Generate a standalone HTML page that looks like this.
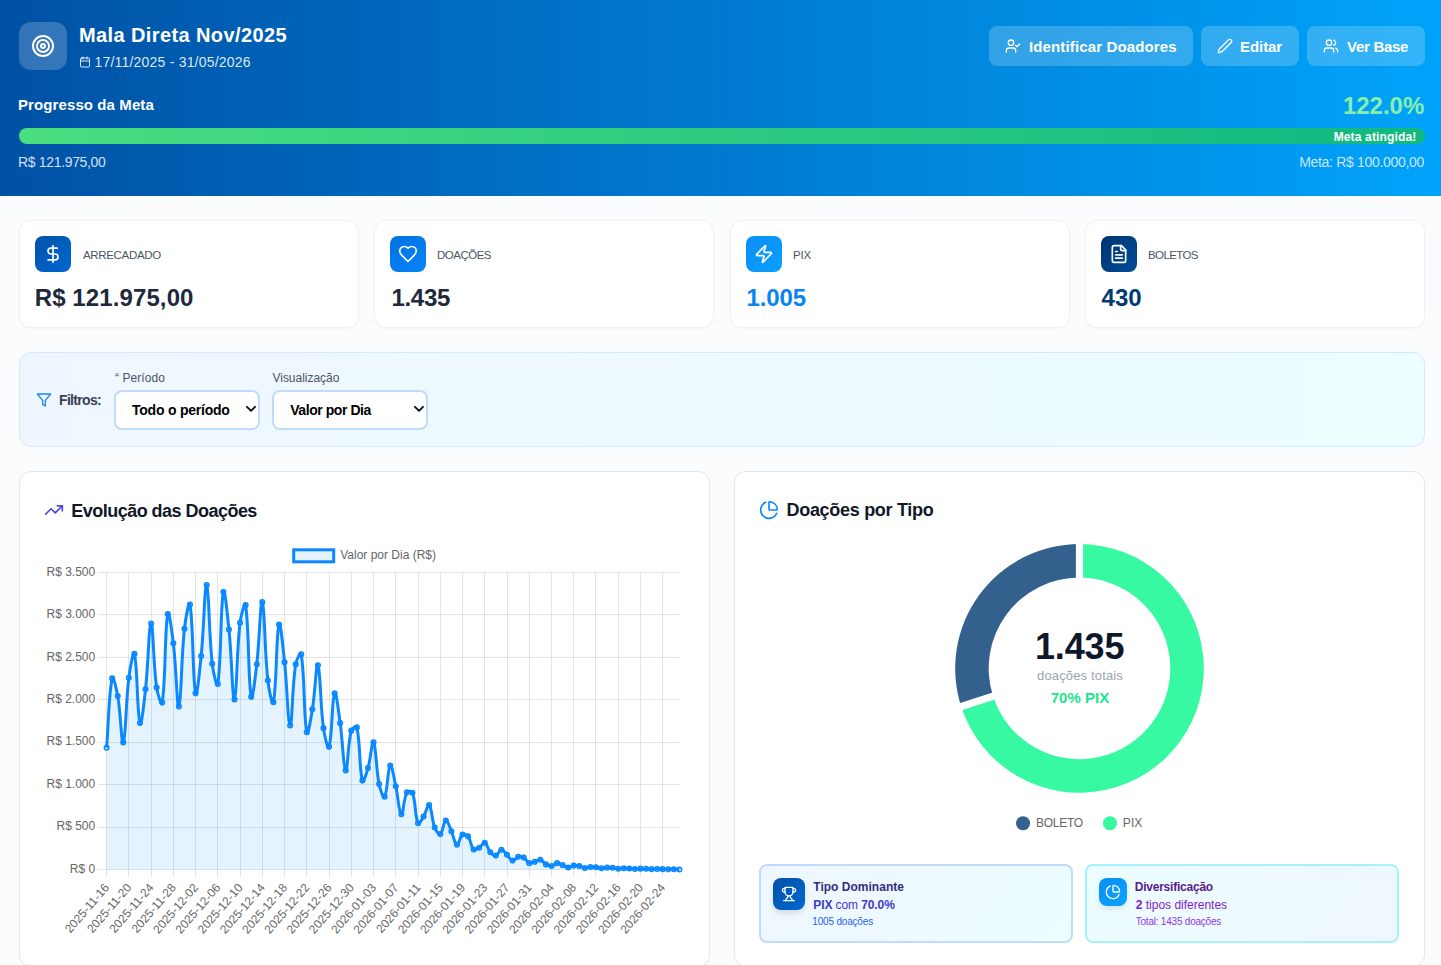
<!DOCTYPE html>
<html lang="pt-BR"><head><meta charset="utf-8"><title>Mala Direta Nov/2025</title>
<style>
*{margin:0;padding:0;box-sizing:border-box}
html,body{width:1441px;height:965px;overflow:hidden}
body{position:relative;font-family:"Liberation Sans", sans-serif;background:#fbfcfd;}
.t{position:absolute;white-space:nowrap}
.ic{position:absolute;display:block}
.box{position:absolute}
</style></head><body>
<div class="box" style="left:0;top:0;width:1441px;height:196px;background:linear-gradient(90deg,#0051a5 0%,#00a3fa 100%);"></div>
<div class="box" style="left:19px;top:22px;width:48px;height:48px;border-radius:12px;background:rgba(255,255,255,0.2)"></div>
<svg class="ic" style="left:31px;top:34px;" width="24" height="24" viewBox="0 0 24 24" fill="none" stroke="#fff" stroke-width="2" stroke-linecap="round" stroke-linejoin="round"><circle cx="12" cy="12" r="10"/><circle cx="12" cy="12" r="6"/><circle cx="12" cy="12" r="2"/></svg>
<div class="t" style="left:78.90px;top:24.67px;font-size:20px;line-height:20px;color:#fff;font-weight:700;letter-spacing:0.405px;">Mala Direta Nov/2025</div>
<svg class="ic" style="left:79px;top:56px;" width="12" height="12" viewBox="0 0 24 24" fill="none" stroke="rgba(255,255,255,0.85)" stroke-width="2" stroke-linecap="round" stroke-linejoin="round"><path d="M8 2v4"/><path d="M16 2v4"/><rect width="18" height="18" x="3" y="4" rx="2"/><path d="M3 10h18"/></svg>
<div class="t" style="left:94.50px;top:54.95px;font-size:14px;line-height:14px;color:rgba(255,255,255,0.88);font-weight:400;letter-spacing:0.205px;">17/11/2025 - 31/05/2026</div>
<div class="box" style="left:989px;top:26px;width:204px;height:40px;border-radius:8px;background:rgba(255,255,255,0.2)"></div>
<svg class="ic" style="left:1005px;top:38px;" width="16" height="16" viewBox="0 0 24 24" fill="none" stroke="#fff" stroke-width="2" stroke-linecap="round" stroke-linejoin="round"><path d="M16 21v-2a4 4 0 0 0-4-4H6a4 4 0 0 0-4 4v2"/><circle cx="9" cy="7" r="4"/><polyline points="16 11 18 13 22 9"/></svg>
<div class="t" style="left:1029.00px;top:38.90px;font-size:15px;line-height:15px;color:#fff;font-weight:700;letter-spacing:0.132px;">Identificar Doadores</div>
<div class="box" style="left:1201px;top:26px;width:98px;height:40px;border-radius:8px;background:rgba(255,255,255,0.2)"></div>
<svg class="ic" style="left:1217px;top:38px;" width="16" height="16" viewBox="0 0 24 24" fill="none" stroke="#fff" stroke-width="2" stroke-linecap="round" stroke-linejoin="round"><path d="M21.174 6.812a1 1 0 0 0-3.986-3.987L3.842 16.174a2 2 0 0 0-.5.83l-1.321 4.352a.5.5 0 0 0 .623.622l4.353-1.32a2 2 0 0 0 .83-.497z"/></svg>
<div class="t" style="left:1240.00px;top:38.90px;font-size:15px;line-height:15px;color:#fff;font-weight:700;letter-spacing:-0.06px;">Editar</div>
<div class="box" style="left:1307px;top:26px;width:118px;height:40px;border-radius:8px;background:rgba(255,255,255,0.2)"></div>
<svg class="ic" style="left:1323px;top:38px;" width="16" height="16" viewBox="0 0 24 24" fill="none" stroke="#fff" stroke-width="2" stroke-linecap="round" stroke-linejoin="round"><path d="M16 21v-2a4 4 0 0 0-4-4H6a4 4 0 0 0-4 4v2"/><circle cx="9" cy="7" r="4"/><path d="M22 21v-2a4 4 0 0 0-3-3.87"/><path d="M16 3.13a4 4 0 0 1 0 7.75"/></svg>
<div class="t" style="left:1347.00px;top:38.90px;font-size:15px;line-height:15px;color:#fff;font-weight:700;letter-spacing:-0.286px;">Ver Base</div>
<div class="t" style="left:18.00px;top:97.30px;font-size:15px;line-height:15px;color:#fff;font-weight:700;letter-spacing:0.1px;">Progresso da Meta</div>
<div class="t" style="right:16.700000000000045px;top:93.68px;font-size:24px;line-height:24px;color:#86efac;font-weight:700;letter-spacing:0.0px;">122.0%</div>
<div class="box" style="left:19px;top:128px;width:1406px;height:16px;border-radius:8px;background:linear-gradient(90deg,#4ade80,#10b981)"></div>
<div class="t" style="right:24.546000000000046px;top:131.14px;font-size:12px;line-height:12px;color:#fff;font-weight:700;letter-spacing:0.154px;">Meta atingida!</div>
<div class="t" style="left:18.00px;top:155.15px;font-size:14px;line-height:14px;color:rgba(230,240,255,0.92);font-weight:400;letter-spacing:-0.333px;">R$ 121.975,00</div>
<div class="t" style="right:17.017000000000046px;top:155.15px;font-size:14px;line-height:14px;color:rgba(220,236,255,0.95);font-weight:400;letter-spacing:-0.317px;">Meta: R$ 100.000,00</div>
<div class="box" style="left:19px;top:220px;width:340px;height:108px;border-radius:12px;background:#fff;box-shadow:0 1px 2px rgba(15,23,42,0.03);border:1px solid rgba(226,232,240,0.55)"></div>
<div class="box" style="left:35px;top:236px;width:36px;height:36px;border-radius:8px;background:linear-gradient(135deg,#0052a8,#0068d2)"></div>
<svg class="ic" style="left:43px;top:244px;" width="20" height="20" viewBox="0 0 24 24" fill="none" stroke="#fff" stroke-width="2" stroke-linecap="round" stroke-linejoin="round"><line x1="12" x2="12" y1="2" y2="22"/><path d="M17 5H9.5a3.5 3.5 0 0 0 0 7h5a3.5 3.5 0 0 1 0 7H6"/></svg>
<div class="t" style="left:83.00px;top:249.57px;font-size:11.5px;line-height:11.5px;color:#4b5563;font-weight:400;letter-spacing:-0.333px;">ARRECADADO</div>
<div class="t" style="left:34.70px;top:285.98px;font-size:24px;line-height:24px;color:#1e293b;font-weight:700;letter-spacing:0.108px;">R$ 121.975,00</div>
<div class="box" style="left:374px;top:220px;width:340px;height:108px;border-radius:12px;background:#fff;box-shadow:0 1px 2px rgba(15,23,42,0.03);border:1px solid rgba(226,232,240,0.55)"></div>
<div class="box" style="left:390px;top:236px;width:36px;height:36px;border-radius:8px;background:linear-gradient(135deg,#0072e0,#0a84f8)"></div>
<svg class="ic" style="left:398px;top:244px;" width="20" height="20" viewBox="0 0 24 24" fill="none" stroke="#fff" stroke-width="2" stroke-linecap="round" stroke-linejoin="round"><path d="M19 14c1.49-1.46 3-3.21 3-5.5A5.5 5.5 0 0 0 16.5 3c-1.76 0-3 .5-4.5 2-1.5-1.5-2.74-2-4.5-2A5.5 5.5 0 0 0 2 8.5c0 2.3 1.5 4.05 3 5.5l7 7Z"/></svg>
<div class="t" style="left:437.00px;top:249.57px;font-size:11.5px;line-height:11.5px;color:#4b5563;font-weight:400;letter-spacing:-0.5px;">DOAÇÕES</div>
<div class="t" style="left:391.50px;top:285.98px;font-size:24px;line-height:24px;color:#1e293b;font-weight:700;letter-spacing:-0.325px;">1.435</div>
<div class="box" style="left:730px;top:220px;width:340px;height:108px;border-radius:12px;background:#fff;box-shadow:0 1px 2px rgba(15,23,42,0.03);border:1px solid rgba(226,232,240,0.55)"></div>
<div class="box" style="left:746px;top:236px;width:36px;height:36px;border-radius:8px;background:linear-gradient(135deg,#0a8ef5,#0aa0ff)"></div>
<svg class="ic" style="left:754px;top:244px;" width="20" height="20" viewBox="0 0 24 24" fill="none" stroke="#fff" stroke-width="2" stroke-linecap="round" stroke-linejoin="round"><path d="M4 14a1 1 0 0 1-.78-1.63l9.9-10.2a.5.5 0 0 1 .86.46l-1.92 6.02A1 1 0 0 0 13 10h7a1 1 0 0 1 .78 1.63l-9.9 10.2a.5.5 0 0 1-.86-.46l1.92-6.02A1 1 0 0 0 11 14z"/></svg>
<div class="t" style="left:793.00px;top:249.57px;font-size:11.5px;line-height:11.5px;color:#4b5563;font-weight:400;letter-spacing:-0.2px;">PIX</div>
<div class="t" style="left:746.50px;top:285.98px;font-size:24px;line-height:24px;color:#0a84f0;font-weight:700;letter-spacing:-0.125px;">1.005</div>
<div class="box" style="left:1085px;top:220px;width:340px;height:108px;border-radius:12px;background:#fff;box-shadow:0 1px 2px rgba(15,23,42,0.03);border:1px solid rgba(226,232,240,0.55)"></div>
<div class="box" style="left:1101px;top:236px;width:36px;height:36px;border-radius:8px;background:linear-gradient(135deg,#00336e,#004c9c)"></div>
<svg class="ic" style="left:1109px;top:244px;" width="20" height="20" viewBox="0 0 24 24" fill="none" stroke="#fff" stroke-width="2" stroke-linecap="round" stroke-linejoin="round"><path d="M15 2H6a2 2 0 0 0-2 2v16a2 2 0 0 0 2 2h12a2 2 0 0 0 2-2V7Z"/><path d="M14 2v4a2 2 0 0 0 2 2h4"/><path d="M10 9H8"/><path d="M16 13H8"/><path d="M16 17H8"/></svg>
<div class="t" style="left:1148.00px;top:249.57px;font-size:11.5px;line-height:11.5px;color:#4b5563;font-weight:400;letter-spacing:-0.6px;">BOLETOS</div>
<div class="t" style="left:1101.60px;top:285.98px;font-size:24px;line-height:24px;color:#003a75;font-weight:700;letter-spacing:0.0px;">430</div>
<div class="box" style="left:19px;top:352px;width:1406px;height:95px;border-radius:12px;background:linear-gradient(90deg,#eff6ff,#ecfeff);border:1px solid #d6e8fb"></div>
<svg class="ic" style="left:36px;top:392px;" width="16" height="16" viewBox="0 0 24 24" fill="none" stroke="#1a86f0" stroke-width="2" stroke-linecap="round" stroke-linejoin="round"><polygon points="22 3 2 3 10 12.46 10 19 14 21 14 12.46 22 3"/></svg>
<div class="t" style="left:59.00px;top:393.15px;font-size:14px;line-height:14px;color:#374151;font-weight:700;letter-spacing:-0.671px;">Filtros:</div>
<div class="t" style="left:115.00px;top:371.64px;font-size:12px;line-height:12px;color:#4b5563;font-weight:400;letter-spacing:0.062px;">“ Período</div>
<div class="t" style="left:272.50px;top:371.64px;font-size:12px;line-height:12px;color:#4b5563;font-weight:400;letter-spacing:-0.027px;">Visualização</div>
<div class="box" style="left:114px;top:390px;width:146px;height:40px;border-radius:8px;background:#fff;border:2px solid #bfdbfe"></div>
<div class="t" style="left:132.00px;top:402.95px;font-size:14px;line-height:14px;color:#000;font-weight:700;letter-spacing:-0.231px;">Todo o período</div>
<svg class="ic" style="left:245.5px;top:404px" width="10" height="10" viewBox="0 0 10 10"><path d="M1 2.8 L5 6.8 L9 2.8" fill="none" stroke="#111" stroke-width="1.9" stroke-linecap="round" stroke-linejoin="round"/></svg>
<div class="box" style="left:272px;top:390px;width:156px;height:40px;border-radius:8px;background:#fff;border:2px solid #bfdbfe"></div>
<div class="t" style="left:290.20px;top:402.95px;font-size:14px;line-height:14px;color:#000;font-weight:700;letter-spacing:-0.433px;">Valor por Dia</div>
<svg class="ic" style="left:413.5px;top:404px" width="10" height="10" viewBox="0 0 10 10"><path d="M1 2.8 L5 6.8 L9 2.8" fill="none" stroke="#111" stroke-width="1.9" stroke-linecap="round" stroke-linejoin="round"/></svg>
<div class="box" style="left:19px;top:471px;width:691px;height:496px;border-radius:12px;background:#fff;border:1px solid #e5e7eb;box-shadow:0 1px 2px rgba(0,0,0,0.03)"></div>
<svg class="ic" style="left:44px;top:500px;" width="20" height="20" viewBox="0 0 24 24" fill="none" stroke="#4f46e5" stroke-width="2" stroke-linecap="round" stroke-linejoin="round"><polyline points="22 7 13.5 15.5 8.5 10.5 2 17"/><polyline points="16 7 22 7 22 13"/></svg>
<div class="t" style="left:71.30px;top:501.66px;font-size:18px;line-height:18px;color:#111827;font-weight:700;letter-spacing:-0.526px;">Evolução das Doações</div>
<svg class="ic" style="left:0;top:0" width="1441" height="965" viewBox="0 0 1441 965"><line x1="98.2" y1="869.5" x2="679.4" y2="869.5" stroke="rgba(0,0,0,0.1)" stroke-width="1"/><text x="95.2" y="872.80" text-anchor="end" font-family="Liberation Sans, sans-serif" font-size="12" fill="#666">R$ 0</text><line x1="98.2" y1="827.5" x2="679.4" y2="827.5" stroke="rgba(0,0,0,0.1)" stroke-width="1"/><text x="95.2" y="830.36" text-anchor="end" font-family="Liberation Sans, sans-serif" font-size="12" fill="#666">R$ 500</text><line x1="98.2" y1="784.5" x2="679.4" y2="784.5" stroke="rgba(0,0,0,0.1)" stroke-width="1"/><text x="95.2" y="787.91" text-anchor="end" font-family="Liberation Sans, sans-serif" font-size="12" fill="#666">R$ 1.000</text><line x1="98.2" y1="742.5" x2="679.4" y2="742.5" stroke="rgba(0,0,0,0.1)" stroke-width="1"/><text x="95.2" y="745.47" text-anchor="end" font-family="Liberation Sans, sans-serif" font-size="12" fill="#666">R$ 1.500</text><line x1="98.2" y1="699.5" x2="679.4" y2="699.5" stroke="rgba(0,0,0,0.1)" stroke-width="1"/><text x="95.2" y="703.03" text-anchor="end" font-family="Liberation Sans, sans-serif" font-size="12" fill="#666">R$ 2.000</text><line x1="98.2" y1="657.5" x2="679.4" y2="657.5" stroke="rgba(0,0,0,0.1)" stroke-width="1"/><text x="95.2" y="660.59" text-anchor="end" font-family="Liberation Sans, sans-serif" font-size="12" fill="#666">R$ 2.500</text><line x1="98.2" y1="614.5" x2="679.4" y2="614.5" stroke="rgba(0,0,0,0.1)" stroke-width="1"/><text x="95.2" y="618.14" text-anchor="end" font-family="Liberation Sans, sans-serif" font-size="12" fill="#666">R$ 3.000</text><line x1="98.2" y1="572.5" x2="679.4" y2="572.5" stroke="rgba(0,0,0,0.1)" stroke-width="1"/><text x="95.2" y="575.70" text-anchor="end" font-family="Liberation Sans, sans-serif" font-size="12" fill="#666">R$ 3.500</text><line x1="106.5" y1="572.4" x2="106.5" y2="877.5" stroke="rgba(0,0,0,0.1)" stroke-width="1"/><line x1="128.5" y1="572.4" x2="128.5" y2="877.5" stroke="rgba(0,0,0,0.1)" stroke-width="1"/><line x1="151.5" y1="572.4" x2="151.5" y2="877.5" stroke="rgba(0,0,0,0.1)" stroke-width="1"/><line x1="173.5" y1="572.4" x2="173.5" y2="877.5" stroke="rgba(0,0,0,0.1)" stroke-width="1"/><line x1="195.5" y1="572.4" x2="195.5" y2="877.5" stroke="rgba(0,0,0,0.1)" stroke-width="1"/><line x1="217.5" y1="572.4" x2="217.5" y2="877.5" stroke="rgba(0,0,0,0.1)" stroke-width="1"/><line x1="240.5" y1="572.4" x2="240.5" y2="877.5" stroke="rgba(0,0,0,0.1)" stroke-width="1"/><line x1="262.5" y1="572.4" x2="262.5" y2="877.5" stroke="rgba(0,0,0,0.1)" stroke-width="1"/><line x1="284.5" y1="572.4" x2="284.5" y2="877.5" stroke="rgba(0,0,0,0.1)" stroke-width="1"/><line x1="306.5" y1="572.4" x2="306.5" y2="877.5" stroke="rgba(0,0,0,0.1)" stroke-width="1"/><line x1="329.5" y1="572.4" x2="329.5" y2="877.5" stroke="rgba(0,0,0,0.1)" stroke-width="1"/><line x1="351.5" y1="572.4" x2="351.5" y2="877.5" stroke="rgba(0,0,0,0.1)" stroke-width="1"/><line x1="373.5" y1="572.4" x2="373.5" y2="877.5" stroke="rgba(0,0,0,0.1)" stroke-width="1"/><line x1="395.5" y1="572.4" x2="395.5" y2="877.5" stroke="rgba(0,0,0,0.1)" stroke-width="1"/><line x1="418.5" y1="572.4" x2="418.5" y2="877.5" stroke="rgba(0,0,0,0.1)" stroke-width="1"/><line x1="440.5" y1="572.4" x2="440.5" y2="877.5" stroke="rgba(0,0,0,0.1)" stroke-width="1"/><line x1="462.5" y1="572.4" x2="462.5" y2="877.5" stroke="rgba(0,0,0,0.1)" stroke-width="1"/><line x1="484.5" y1="572.4" x2="484.5" y2="877.5" stroke="rgba(0,0,0,0.1)" stroke-width="1"/><line x1="507.5" y1="572.4" x2="507.5" y2="877.5" stroke="rgba(0,0,0,0.1)" stroke-width="1"/><line x1="529.5" y1="572.4" x2="529.5" y2="877.5" stroke="rgba(0,0,0,0.1)" stroke-width="1"/><line x1="551.5" y1="572.4" x2="551.5" y2="877.5" stroke="rgba(0,0,0,0.1)" stroke-width="1"/><line x1="573.5" y1="572.4" x2="573.5" y2="877.5" stroke="rgba(0,0,0,0.1)" stroke-width="1"/><line x1="595.5" y1="572.4" x2="595.5" y2="877.5" stroke="rgba(0,0,0,0.1)" stroke-width="1"/><line x1="618.5" y1="572.4" x2="618.5" y2="877.5" stroke="rgba(0,0,0,0.1)" stroke-width="1"/><line x1="640.5" y1="572.4" x2="640.5" y2="877.5" stroke="rgba(0,0,0,0.1)" stroke-width="1"/><line x1="662.5" y1="572.4" x2="662.5" y2="877.5" stroke="rgba(0,0,0,0.1)" stroke-width="1"/><text transform="translate(101.17,880.50) rotate(-49)" x="0" y="11.50" text-anchor="end" font-family="Liberation Sans, sans-serif" font-size="12" fill="#666">2025-11-16</text><text transform="translate(123.41,880.50) rotate(-49)" x="0" y="11.50" text-anchor="end" font-family="Liberation Sans, sans-serif" font-size="12" fill="#666">2025-11-20</text><text transform="translate(145.66,880.50) rotate(-49)" x="0" y="11.50" text-anchor="end" font-family="Liberation Sans, sans-serif" font-size="12" fill="#666">2025-11-24</text><text transform="translate(167.90,880.50) rotate(-49)" x="0" y="11.50" text-anchor="end" font-family="Liberation Sans, sans-serif" font-size="12" fill="#666">2025-11-28</text><text transform="translate(190.14,880.50) rotate(-49)" x="0" y="11.50" text-anchor="end" font-family="Liberation Sans, sans-serif" font-size="12" fill="#666">2025-12-02</text><text transform="translate(212.39,880.50) rotate(-49)" x="0" y="11.50" text-anchor="end" font-family="Liberation Sans, sans-serif" font-size="12" fill="#666">2025-12-06</text><text transform="translate(234.63,880.50) rotate(-49)" x="0" y="11.50" text-anchor="end" font-family="Liberation Sans, sans-serif" font-size="12" fill="#666">2025-12-10</text><text transform="translate(256.88,880.50) rotate(-49)" x="0" y="11.50" text-anchor="end" font-family="Liberation Sans, sans-serif" font-size="12" fill="#666">2025-12-14</text><text transform="translate(279.12,880.50) rotate(-49)" x="0" y="11.50" text-anchor="end" font-family="Liberation Sans, sans-serif" font-size="12" fill="#666">2025-12-18</text><text transform="translate(301.37,880.50) rotate(-49)" x="0" y="11.50" text-anchor="end" font-family="Liberation Sans, sans-serif" font-size="12" fill="#666">2025-12-22</text><text transform="translate(323.61,880.50) rotate(-49)" x="0" y="11.50" text-anchor="end" font-family="Liberation Sans, sans-serif" font-size="12" fill="#666">2025-12-26</text><text transform="translate(345.86,880.50) rotate(-49)" x="0" y="11.50" text-anchor="end" font-family="Liberation Sans, sans-serif" font-size="12" fill="#666">2025-12-30</text><text transform="translate(368.10,880.50) rotate(-49)" x="0" y="11.50" text-anchor="end" font-family="Liberation Sans, sans-serif" font-size="12" fill="#666">2026-01-03</text><text transform="translate(390.35,880.50) rotate(-49)" x="0" y="11.50" text-anchor="end" font-family="Liberation Sans, sans-serif" font-size="12" fill="#666">2026-01-07</text><text transform="translate(412.59,880.50) rotate(-49)" x="0" y="11.50" text-anchor="end" font-family="Liberation Sans, sans-serif" font-size="12" fill="#666">2026-01-11</text><text transform="translate(434.84,880.50) rotate(-49)" x="0" y="11.50" text-anchor="end" font-family="Liberation Sans, sans-serif" font-size="12" fill="#666">2026-01-15</text><text transform="translate(457.08,880.50) rotate(-49)" x="0" y="11.50" text-anchor="end" font-family="Liberation Sans, sans-serif" font-size="12" fill="#666">2026-01-19</text><text transform="translate(479.33,880.50) rotate(-49)" x="0" y="11.50" text-anchor="end" font-family="Liberation Sans, sans-serif" font-size="12" fill="#666">2026-01-23</text><text transform="translate(501.57,880.50) rotate(-49)" x="0" y="11.50" text-anchor="end" font-family="Liberation Sans, sans-serif" font-size="12" fill="#666">2026-01-27</text><text transform="translate(523.81,880.50) rotate(-49)" x="0" y="11.50" text-anchor="end" font-family="Liberation Sans, sans-serif" font-size="12" fill="#666">2026-01-31</text><text transform="translate(546.06,880.50) rotate(-49)" x="0" y="11.50" text-anchor="end" font-family="Liberation Sans, sans-serif" font-size="12" fill="#666">2026-02-04</text><text transform="translate(568.30,880.50) rotate(-49)" x="0" y="11.50" text-anchor="end" font-family="Liberation Sans, sans-serif" font-size="12" fill="#666">2026-02-08</text><text transform="translate(590.55,880.50) rotate(-49)" x="0" y="11.50" text-anchor="end" font-family="Liberation Sans, sans-serif" font-size="12" fill="#666">2026-02-12</text><text transform="translate(612.79,880.50) rotate(-49)" x="0" y="11.50" text-anchor="end" font-family="Liberation Sans, sans-serif" font-size="12" fill="#666">2026-02-16</text><text transform="translate(635.04,880.50) rotate(-49)" x="0" y="11.50" text-anchor="end" font-family="Liberation Sans, sans-serif" font-size="12" fill="#666">2026-02-20</text><text transform="translate(657.28,880.50) rotate(-49)" x="0" y="11.50" text-anchor="end" font-family="Liberation Sans, sans-serif" font-size="12" fill="#666">2026-02-24</text><path d="M106.60,747.69 C108.82,719.98 108.65,694.72 112.16,678.42 C113.10,674.08 116.46,688.81 117.72,696.08 C120.91,714.44 121.42,745.57 123.28,742.51 C125.87,738.27 125.62,703.54 128.84,677.83 C130.07,668.09 133.24,649.16 134.41,653.89 C137.69,667.26 136.99,713.62 139.97,723.07 C141.44,727.75 144.01,702.84 145.53,689.20 C148.45,663.01 148.84,623.85 151.09,623.50 C153.28,623.17 153.09,662.20 156.65,687.51 C157.54,693.85 161.53,707.13 162.21,702.61 C165.98,677.76 164.44,631.89 167.77,614.08 C168.89,608.13 171.92,631.44 173.33,643.19 C176.37,668.38 176.90,709.04 178.90,706.43 C181.35,703.23 181.08,659.61 184.46,628.68 C185.53,618.86 189.05,598.94 190.02,604.57 C193.50,624.82 192.46,678.92 195.58,693.36 C196.90,699.49 199.60,671.03 201.14,656.01 C204.05,627.70 204.59,583.58 206.70,585.05 C209.04,586.67 208.75,632.48 212.26,663.74 C213.20,672.07 217.00,689.35 217.82,684.02 C221.45,660.70 220.23,607.58 223.38,592.09 C224.68,585.74 227.39,614.43 228.95,629.44 C231.84,657.41 232.38,700.84 234.51,699.56 C236.83,698.16 236.48,653.20 240.07,622.74 C240.93,615.45 244.89,600.21 245.63,605.17 C249.33,629.85 247.92,679.43 251.19,696.84 C252.37,703.10 255.22,677.43 256.75,664.33 C259.66,639.50 260.34,599.15 262.31,602.03 C264.79,605.64 264.41,649.34 267.87,680.54 C268.86,689.40 272.44,707.19 273.43,702.19 C276.89,684.75 276.01,635.17 279.00,624.43 C280.46,619.18 282.89,647.03 284.56,662.21 C287.34,687.44 287.86,725.02 290.12,725.45 C292.31,725.87 291.93,688.30 295.68,664.33 C296.38,659.88 300.67,650.94 301.24,654.40 C305.12,678.14 303.39,715.46 306.80,732.32 C307.84,737.43 310.82,718.65 312.36,709.32 C315.27,691.82 316.09,662.15 317.92,665.26 C320.54,669.69 320.09,703.23 323.49,728.17 C324.53,735.86 327.86,750.54 329.05,746.84 C332.31,736.62 331.76,699.42 334.61,693.36 C336.21,689.95 338.44,711.16 340.17,723.16 C342.89,742.03 343.32,768.90 345.73,770.52 C347.77,771.89 347.45,745.50 351.29,730.63 C351.90,728.25 356.38,725.26 356.85,727.40 C360.82,745.26 358.87,767.68 362.41,780.62 C363.32,783.95 366.45,773.31 367.97,768.06 C370.90,758.00 371.82,739.89 373.54,742.34 C376.27,746.24 375.75,767.61 379.10,783.94 C380.20,789.34 383.30,798.92 384.66,796.67 C387.75,791.55 387.57,767.98 390.22,765.51 C392.02,763.84 393.87,777.92 395.78,786.31 C398.32,797.44 398.86,812.98 401.34,814.32 C403.31,815.39 403.33,799.26 406.90,792.34 C407.78,790.64 411.79,790.88 412.46,792.76 C416.23,803.24 414.55,815.78 418.03,823.24 C419.00,825.32 421.79,819.54 423.59,816.62 C426.24,812.28 427.56,803.51 429.15,805.07 C432.01,807.89 431.46,819.09 434.71,827.57 C435.91,830.70 438.63,835.15 440.27,834.10 C443.08,832.30 443.40,821.05 445.83,820.44 C447.85,819.93 449.37,826.86 451.39,831.30 C453.82,836.61 454.48,844.08 456.95,844.80 C458.93,845.37 459.55,836.76 462.51,834.53 C464.00,833.40 466.78,834.65 468.08,836.39 C471.22,840.62 470.48,846.27 473.64,849.47 C474.93,850.78 477.25,848.87 479.20,847.68 C481.70,846.16 482.97,841.94 484.76,842.68 C487.42,843.77 487.51,849.01 490.32,852.27 C491.96,854.17 493.89,856.02 495.88,855.58 C498.34,855.03 499.14,849.96 501.44,849.81 C503.59,849.66 504.86,852.73 507.00,854.81 C509.30,857.04 510.14,860.14 512.57,860.59 C514.59,860.96 515.70,857.52 518.13,856.85 C520.15,856.30 521.84,856.49 523.69,857.53 C526.29,859.00 526.67,862.13 529.25,863.13 C531.11,863.86 532.63,862.51 534.81,861.86 C537.08,861.19 538.36,859.36 540.37,859.82 C542.81,860.38 543.46,863.05 545.93,864.41 C547.91,865.49 549.35,866.18 551.49,865.93 C553.80,865.67 554.77,863.29 557.05,863.13 C559.22,862.98 560.41,864.31 562.62,865.17 C564.86,866.04 565.92,867.38 568.18,867.46 C570.37,867.55 571.46,865.89 573.74,865.60 C575.91,865.31 577.14,865.54 579.30,866.02 C581.59,866.53 582.59,867.87 584.86,868.06 C587.04,868.24 588.18,867.11 590.42,866.95 C592.63,866.80 593.77,867.02 595.98,867.29 C598.22,867.57 599.31,868.24 601.54,868.31 C603.76,868.38 604.87,867.73 607.10,867.63 C609.32,867.53 610.46,867.58 612.67,867.80 C614.91,868.02 615.99,868.65 618.23,868.74 C620.44,868.82 621.56,868.28 623.79,868.23 C626.01,868.18 627.13,868.33 629.35,868.48 C631.58,868.63 632.68,868.96 634.91,868.99 C637.13,869.02 638.25,868.69 640.47,868.65 C642.69,868.62 643.81,868.72 646.03,868.82 C648.26,868.92 649.37,869.13 651.59,869.16 C653.82,869.19 654.93,868.99 657.16,868.99 C659.38,868.99 660.49,869.09 662.72,869.16 C664.94,869.23 666.05,869.31 668.28,869.33 C670.50,869.35 671.62,869.21 673.84,869.25 C676.06,869.28 677.18,869.40 679.40,869.50 L679.40,869.5 L106.60,869.5 Z" fill="rgba(0,136,255,0.1)" stroke="none"/><path d="M106.60,747.69 C108.82,719.98 108.65,694.72 112.16,678.42 C113.10,674.08 116.46,688.81 117.72,696.08 C120.91,714.44 121.42,745.57 123.28,742.51 C125.87,738.27 125.62,703.54 128.84,677.83 C130.07,668.09 133.24,649.16 134.41,653.89 C137.69,667.26 136.99,713.62 139.97,723.07 C141.44,727.75 144.01,702.84 145.53,689.20 C148.45,663.01 148.84,623.85 151.09,623.50 C153.28,623.17 153.09,662.20 156.65,687.51 C157.54,693.85 161.53,707.13 162.21,702.61 C165.98,677.76 164.44,631.89 167.77,614.08 C168.89,608.13 171.92,631.44 173.33,643.19 C176.37,668.38 176.90,709.04 178.90,706.43 C181.35,703.23 181.08,659.61 184.46,628.68 C185.53,618.86 189.05,598.94 190.02,604.57 C193.50,624.82 192.46,678.92 195.58,693.36 C196.90,699.49 199.60,671.03 201.14,656.01 C204.05,627.70 204.59,583.58 206.70,585.05 C209.04,586.67 208.75,632.48 212.26,663.74 C213.20,672.07 217.00,689.35 217.82,684.02 C221.45,660.70 220.23,607.58 223.38,592.09 C224.68,585.74 227.39,614.43 228.95,629.44 C231.84,657.41 232.38,700.84 234.51,699.56 C236.83,698.16 236.48,653.20 240.07,622.74 C240.93,615.45 244.89,600.21 245.63,605.17 C249.33,629.85 247.92,679.43 251.19,696.84 C252.37,703.10 255.22,677.43 256.75,664.33 C259.66,639.50 260.34,599.15 262.31,602.03 C264.79,605.64 264.41,649.34 267.87,680.54 C268.86,689.40 272.44,707.19 273.43,702.19 C276.89,684.75 276.01,635.17 279.00,624.43 C280.46,619.18 282.89,647.03 284.56,662.21 C287.34,687.44 287.86,725.02 290.12,725.45 C292.31,725.87 291.93,688.30 295.68,664.33 C296.38,659.88 300.67,650.94 301.24,654.40 C305.12,678.14 303.39,715.46 306.80,732.32 C307.84,737.43 310.82,718.65 312.36,709.32 C315.27,691.82 316.09,662.15 317.92,665.26 C320.54,669.69 320.09,703.23 323.49,728.17 C324.53,735.86 327.86,750.54 329.05,746.84 C332.31,736.62 331.76,699.42 334.61,693.36 C336.21,689.95 338.44,711.16 340.17,723.16 C342.89,742.03 343.32,768.90 345.73,770.52 C347.77,771.89 347.45,745.50 351.29,730.63 C351.90,728.25 356.38,725.26 356.85,727.40 C360.82,745.26 358.87,767.68 362.41,780.62 C363.32,783.95 366.45,773.31 367.97,768.06 C370.90,758.00 371.82,739.89 373.54,742.34 C376.27,746.24 375.75,767.61 379.10,783.94 C380.20,789.34 383.30,798.92 384.66,796.67 C387.75,791.55 387.57,767.98 390.22,765.51 C392.02,763.84 393.87,777.92 395.78,786.31 C398.32,797.44 398.86,812.98 401.34,814.32 C403.31,815.39 403.33,799.26 406.90,792.34 C407.78,790.64 411.79,790.88 412.46,792.76 C416.23,803.24 414.55,815.78 418.03,823.24 C419.00,825.32 421.79,819.54 423.59,816.62 C426.24,812.28 427.56,803.51 429.15,805.07 C432.01,807.89 431.46,819.09 434.71,827.57 C435.91,830.70 438.63,835.15 440.27,834.10 C443.08,832.30 443.40,821.05 445.83,820.44 C447.85,819.93 449.37,826.86 451.39,831.30 C453.82,836.61 454.48,844.08 456.95,844.80 C458.93,845.37 459.55,836.76 462.51,834.53 C464.00,833.40 466.78,834.65 468.08,836.39 C471.22,840.62 470.48,846.27 473.64,849.47 C474.93,850.78 477.25,848.87 479.20,847.68 C481.70,846.16 482.97,841.94 484.76,842.68 C487.42,843.77 487.51,849.01 490.32,852.27 C491.96,854.17 493.89,856.02 495.88,855.58 C498.34,855.03 499.14,849.96 501.44,849.81 C503.59,849.66 504.86,852.73 507.00,854.81 C509.30,857.04 510.14,860.14 512.57,860.59 C514.59,860.96 515.70,857.52 518.13,856.85 C520.15,856.30 521.84,856.49 523.69,857.53 C526.29,859.00 526.67,862.13 529.25,863.13 C531.11,863.86 532.63,862.51 534.81,861.86 C537.08,861.19 538.36,859.36 540.37,859.82 C542.81,860.38 543.46,863.05 545.93,864.41 C547.91,865.49 549.35,866.18 551.49,865.93 C553.80,865.67 554.77,863.29 557.05,863.13 C559.22,862.98 560.41,864.31 562.62,865.17 C564.86,866.04 565.92,867.38 568.18,867.46 C570.37,867.55 571.46,865.89 573.74,865.60 C575.91,865.31 577.14,865.54 579.30,866.02 C581.59,866.53 582.59,867.87 584.86,868.06 C587.04,868.24 588.18,867.11 590.42,866.95 C592.63,866.80 593.77,867.02 595.98,867.29 C598.22,867.57 599.31,868.24 601.54,868.31 C603.76,868.38 604.87,867.73 607.10,867.63 C609.32,867.53 610.46,867.58 612.67,867.80 C614.91,868.02 615.99,868.65 618.23,868.74 C620.44,868.82 621.56,868.28 623.79,868.23 C626.01,868.18 627.13,868.33 629.35,868.48 C631.58,868.63 632.68,868.96 634.91,868.99 C637.13,869.02 638.25,868.69 640.47,868.65 C642.69,868.62 643.81,868.72 646.03,868.82 C648.26,868.92 649.37,869.13 651.59,869.16 C653.82,869.19 654.93,868.99 657.16,868.99 C659.38,868.99 660.49,869.09 662.72,869.16 C664.94,869.23 666.05,869.31 668.28,869.33 C670.50,869.35 671.62,869.21 673.84,869.25 C676.06,869.28 677.18,869.40 679.40,869.50" fill="none" stroke="#0a88ff" stroke-width="3" stroke-linejoin="round"/><circle cx="106.60" cy="747.69" r="2.3" fill="rgba(0,136,255,0.1)" stroke="#0a88ff" stroke-width="1.5"/><circle cx="112.16" cy="678.42" r="2.3" fill="rgba(0,136,255,0.1)" stroke="#0a88ff" stroke-width="1.5"/><circle cx="117.72" cy="696.08" r="2.3" fill="rgba(0,136,255,0.1)" stroke="#0a88ff" stroke-width="1.5"/><circle cx="123.28" cy="742.51" r="2.3" fill="rgba(0,136,255,0.1)" stroke="#0a88ff" stroke-width="1.5"/><circle cx="128.84" cy="677.83" r="2.3" fill="rgba(0,136,255,0.1)" stroke="#0a88ff" stroke-width="1.5"/><circle cx="134.41" cy="653.89" r="2.3" fill="rgba(0,136,255,0.1)" stroke="#0a88ff" stroke-width="1.5"/><circle cx="139.97" cy="723.07" r="2.3" fill="rgba(0,136,255,0.1)" stroke="#0a88ff" stroke-width="1.5"/><circle cx="145.53" cy="689.20" r="2.3" fill="rgba(0,136,255,0.1)" stroke="#0a88ff" stroke-width="1.5"/><circle cx="151.09" cy="623.50" r="2.3" fill="rgba(0,136,255,0.1)" stroke="#0a88ff" stroke-width="1.5"/><circle cx="156.65" cy="687.51" r="2.3" fill="rgba(0,136,255,0.1)" stroke="#0a88ff" stroke-width="1.5"/><circle cx="162.21" cy="702.61" r="2.3" fill="rgba(0,136,255,0.1)" stroke="#0a88ff" stroke-width="1.5"/><circle cx="167.77" cy="614.08" r="2.3" fill="rgba(0,136,255,0.1)" stroke="#0a88ff" stroke-width="1.5"/><circle cx="173.33" cy="643.19" r="2.3" fill="rgba(0,136,255,0.1)" stroke="#0a88ff" stroke-width="1.5"/><circle cx="178.90" cy="706.43" r="2.3" fill="rgba(0,136,255,0.1)" stroke="#0a88ff" stroke-width="1.5"/><circle cx="184.46" cy="628.68" r="2.3" fill="rgba(0,136,255,0.1)" stroke="#0a88ff" stroke-width="1.5"/><circle cx="190.02" cy="604.57" r="2.3" fill="rgba(0,136,255,0.1)" stroke="#0a88ff" stroke-width="1.5"/><circle cx="195.58" cy="693.36" r="2.3" fill="rgba(0,136,255,0.1)" stroke="#0a88ff" stroke-width="1.5"/><circle cx="201.14" cy="656.01" r="2.3" fill="rgba(0,136,255,0.1)" stroke="#0a88ff" stroke-width="1.5"/><circle cx="206.70" cy="585.05" r="2.3" fill="rgba(0,136,255,0.1)" stroke="#0a88ff" stroke-width="1.5"/><circle cx="212.26" cy="663.74" r="2.3" fill="rgba(0,136,255,0.1)" stroke="#0a88ff" stroke-width="1.5"/><circle cx="217.82" cy="684.02" r="2.3" fill="rgba(0,136,255,0.1)" stroke="#0a88ff" stroke-width="1.5"/><circle cx="223.38" cy="592.09" r="2.3" fill="rgba(0,136,255,0.1)" stroke="#0a88ff" stroke-width="1.5"/><circle cx="228.95" cy="629.44" r="2.3" fill="rgba(0,136,255,0.1)" stroke="#0a88ff" stroke-width="1.5"/><circle cx="234.51" cy="699.56" r="2.3" fill="rgba(0,136,255,0.1)" stroke="#0a88ff" stroke-width="1.5"/><circle cx="240.07" cy="622.74" r="2.3" fill="rgba(0,136,255,0.1)" stroke="#0a88ff" stroke-width="1.5"/><circle cx="245.63" cy="605.17" r="2.3" fill="rgba(0,136,255,0.1)" stroke="#0a88ff" stroke-width="1.5"/><circle cx="251.19" cy="696.84" r="2.3" fill="rgba(0,136,255,0.1)" stroke="#0a88ff" stroke-width="1.5"/><circle cx="256.75" cy="664.33" r="2.3" fill="rgba(0,136,255,0.1)" stroke="#0a88ff" stroke-width="1.5"/><circle cx="262.31" cy="602.03" r="2.3" fill="rgba(0,136,255,0.1)" stroke="#0a88ff" stroke-width="1.5"/><circle cx="267.87" cy="680.54" r="2.3" fill="rgba(0,136,255,0.1)" stroke="#0a88ff" stroke-width="1.5"/><circle cx="273.43" cy="702.19" r="2.3" fill="rgba(0,136,255,0.1)" stroke="#0a88ff" stroke-width="1.5"/><circle cx="279.00" cy="624.43" r="2.3" fill="rgba(0,136,255,0.1)" stroke="#0a88ff" stroke-width="1.5"/><circle cx="284.56" cy="662.21" r="2.3" fill="rgba(0,136,255,0.1)" stroke="#0a88ff" stroke-width="1.5"/><circle cx="290.12" cy="725.45" r="2.3" fill="rgba(0,136,255,0.1)" stroke="#0a88ff" stroke-width="1.5"/><circle cx="295.68" cy="664.33" r="2.3" fill="rgba(0,136,255,0.1)" stroke="#0a88ff" stroke-width="1.5"/><circle cx="301.24" cy="654.40" r="2.3" fill="rgba(0,136,255,0.1)" stroke="#0a88ff" stroke-width="1.5"/><circle cx="306.80" cy="732.32" r="2.3" fill="rgba(0,136,255,0.1)" stroke="#0a88ff" stroke-width="1.5"/><circle cx="312.36" cy="709.32" r="2.3" fill="rgba(0,136,255,0.1)" stroke="#0a88ff" stroke-width="1.5"/><circle cx="317.92" cy="665.26" r="2.3" fill="rgba(0,136,255,0.1)" stroke="#0a88ff" stroke-width="1.5"/><circle cx="323.49" cy="728.17" r="2.3" fill="rgba(0,136,255,0.1)" stroke="#0a88ff" stroke-width="1.5"/><circle cx="329.05" cy="746.84" r="2.3" fill="rgba(0,136,255,0.1)" stroke="#0a88ff" stroke-width="1.5"/><circle cx="334.61" cy="693.36" r="2.3" fill="rgba(0,136,255,0.1)" stroke="#0a88ff" stroke-width="1.5"/><circle cx="340.17" cy="723.16" r="2.3" fill="rgba(0,136,255,0.1)" stroke="#0a88ff" stroke-width="1.5"/><circle cx="345.73" cy="770.52" r="2.3" fill="rgba(0,136,255,0.1)" stroke="#0a88ff" stroke-width="1.5"/><circle cx="351.29" cy="730.63" r="2.3" fill="rgba(0,136,255,0.1)" stroke="#0a88ff" stroke-width="1.5"/><circle cx="356.85" cy="727.40" r="2.3" fill="rgba(0,136,255,0.1)" stroke="#0a88ff" stroke-width="1.5"/><circle cx="362.41" cy="780.62" r="2.3" fill="rgba(0,136,255,0.1)" stroke="#0a88ff" stroke-width="1.5"/><circle cx="367.97" cy="768.06" r="2.3" fill="rgba(0,136,255,0.1)" stroke="#0a88ff" stroke-width="1.5"/><circle cx="373.54" cy="742.34" r="2.3" fill="rgba(0,136,255,0.1)" stroke="#0a88ff" stroke-width="1.5"/><circle cx="379.10" cy="783.94" r="2.3" fill="rgba(0,136,255,0.1)" stroke="#0a88ff" stroke-width="1.5"/><circle cx="384.66" cy="796.67" r="2.3" fill="rgba(0,136,255,0.1)" stroke="#0a88ff" stroke-width="1.5"/><circle cx="390.22" cy="765.51" r="2.3" fill="rgba(0,136,255,0.1)" stroke="#0a88ff" stroke-width="1.5"/><circle cx="395.78" cy="786.31" r="2.3" fill="rgba(0,136,255,0.1)" stroke="#0a88ff" stroke-width="1.5"/><circle cx="401.34" cy="814.32" r="2.3" fill="rgba(0,136,255,0.1)" stroke="#0a88ff" stroke-width="1.5"/><circle cx="406.90" cy="792.34" r="2.3" fill="rgba(0,136,255,0.1)" stroke="#0a88ff" stroke-width="1.5"/><circle cx="412.46" cy="792.76" r="2.3" fill="rgba(0,136,255,0.1)" stroke="#0a88ff" stroke-width="1.5"/><circle cx="418.03" cy="823.24" r="2.3" fill="rgba(0,136,255,0.1)" stroke="#0a88ff" stroke-width="1.5"/><circle cx="423.59" cy="816.62" r="2.3" fill="rgba(0,136,255,0.1)" stroke="#0a88ff" stroke-width="1.5"/><circle cx="429.15" cy="805.07" r="2.3" fill="rgba(0,136,255,0.1)" stroke="#0a88ff" stroke-width="1.5"/><circle cx="434.71" cy="827.57" r="2.3" fill="rgba(0,136,255,0.1)" stroke="#0a88ff" stroke-width="1.5"/><circle cx="440.27" cy="834.10" r="2.3" fill="rgba(0,136,255,0.1)" stroke="#0a88ff" stroke-width="1.5"/><circle cx="445.83" cy="820.44" r="2.3" fill="rgba(0,136,255,0.1)" stroke="#0a88ff" stroke-width="1.5"/><circle cx="451.39" cy="831.30" r="2.3" fill="rgba(0,136,255,0.1)" stroke="#0a88ff" stroke-width="1.5"/><circle cx="456.95" cy="844.80" r="2.3" fill="rgba(0,136,255,0.1)" stroke="#0a88ff" stroke-width="1.5"/><circle cx="462.51" cy="834.53" r="2.3" fill="rgba(0,136,255,0.1)" stroke="#0a88ff" stroke-width="1.5"/><circle cx="468.08" cy="836.39" r="2.3" fill="rgba(0,136,255,0.1)" stroke="#0a88ff" stroke-width="1.5"/><circle cx="473.64" cy="849.47" r="2.3" fill="rgba(0,136,255,0.1)" stroke="#0a88ff" stroke-width="1.5"/><circle cx="479.20" cy="847.68" r="2.3" fill="rgba(0,136,255,0.1)" stroke="#0a88ff" stroke-width="1.5"/><circle cx="484.76" cy="842.68" r="2.3" fill="rgba(0,136,255,0.1)" stroke="#0a88ff" stroke-width="1.5"/><circle cx="490.32" cy="852.27" r="2.3" fill="rgba(0,136,255,0.1)" stroke="#0a88ff" stroke-width="1.5"/><circle cx="495.88" cy="855.58" r="2.3" fill="rgba(0,136,255,0.1)" stroke="#0a88ff" stroke-width="1.5"/><circle cx="501.44" cy="849.81" r="2.3" fill="rgba(0,136,255,0.1)" stroke="#0a88ff" stroke-width="1.5"/><circle cx="507.00" cy="854.81" r="2.3" fill="rgba(0,136,255,0.1)" stroke="#0a88ff" stroke-width="1.5"/><circle cx="512.57" cy="860.59" r="2.3" fill="rgba(0,136,255,0.1)" stroke="#0a88ff" stroke-width="1.5"/><circle cx="518.13" cy="856.85" r="2.3" fill="rgba(0,136,255,0.1)" stroke="#0a88ff" stroke-width="1.5"/><circle cx="523.69" cy="857.53" r="2.3" fill="rgba(0,136,255,0.1)" stroke="#0a88ff" stroke-width="1.5"/><circle cx="529.25" cy="863.13" r="2.3" fill="rgba(0,136,255,0.1)" stroke="#0a88ff" stroke-width="1.5"/><circle cx="534.81" cy="861.86" r="2.3" fill="rgba(0,136,255,0.1)" stroke="#0a88ff" stroke-width="1.5"/><circle cx="540.37" cy="859.82" r="2.3" fill="rgba(0,136,255,0.1)" stroke="#0a88ff" stroke-width="1.5"/><circle cx="545.93" cy="864.41" r="2.3" fill="rgba(0,136,255,0.1)" stroke="#0a88ff" stroke-width="1.5"/><circle cx="551.49" cy="865.93" r="2.3" fill="rgba(0,136,255,0.1)" stroke="#0a88ff" stroke-width="1.5"/><circle cx="557.05" cy="863.13" r="2.3" fill="rgba(0,136,255,0.1)" stroke="#0a88ff" stroke-width="1.5"/><circle cx="562.62" cy="865.17" r="2.3" fill="rgba(0,136,255,0.1)" stroke="#0a88ff" stroke-width="1.5"/><circle cx="568.18" cy="867.46" r="2.3" fill="rgba(0,136,255,0.1)" stroke="#0a88ff" stroke-width="1.5"/><circle cx="573.74" cy="865.60" r="2.3" fill="rgba(0,136,255,0.1)" stroke="#0a88ff" stroke-width="1.5"/><circle cx="579.30" cy="866.02" r="2.3" fill="rgba(0,136,255,0.1)" stroke="#0a88ff" stroke-width="1.5"/><circle cx="584.86" cy="868.06" r="2.3" fill="rgba(0,136,255,0.1)" stroke="#0a88ff" stroke-width="1.5"/><circle cx="590.42" cy="866.95" r="2.3" fill="rgba(0,136,255,0.1)" stroke="#0a88ff" stroke-width="1.5"/><circle cx="595.98" cy="867.29" r="2.3" fill="rgba(0,136,255,0.1)" stroke="#0a88ff" stroke-width="1.5"/><circle cx="601.54" cy="868.31" r="2.3" fill="rgba(0,136,255,0.1)" stroke="#0a88ff" stroke-width="1.5"/><circle cx="607.10" cy="867.63" r="2.3" fill="rgba(0,136,255,0.1)" stroke="#0a88ff" stroke-width="1.5"/><circle cx="612.67" cy="867.80" r="2.3" fill="rgba(0,136,255,0.1)" stroke="#0a88ff" stroke-width="1.5"/><circle cx="618.23" cy="868.74" r="2.3" fill="rgba(0,136,255,0.1)" stroke="#0a88ff" stroke-width="1.5"/><circle cx="623.79" cy="868.23" r="2.3" fill="rgba(0,136,255,0.1)" stroke="#0a88ff" stroke-width="1.5"/><circle cx="629.35" cy="868.48" r="2.3" fill="rgba(0,136,255,0.1)" stroke="#0a88ff" stroke-width="1.5"/><circle cx="634.91" cy="868.99" r="2.3" fill="rgba(0,136,255,0.1)" stroke="#0a88ff" stroke-width="1.5"/><circle cx="640.47" cy="868.65" r="2.3" fill="rgba(0,136,255,0.1)" stroke="#0a88ff" stroke-width="1.5"/><circle cx="646.03" cy="868.82" r="2.3" fill="rgba(0,136,255,0.1)" stroke="#0a88ff" stroke-width="1.5"/><circle cx="651.59" cy="869.16" r="2.3" fill="rgba(0,136,255,0.1)" stroke="#0a88ff" stroke-width="1.5"/><circle cx="657.16" cy="868.99" r="2.3" fill="rgba(0,136,255,0.1)" stroke="#0a88ff" stroke-width="1.5"/><circle cx="662.72" cy="869.16" r="2.3" fill="rgba(0,136,255,0.1)" stroke="#0a88ff" stroke-width="1.5"/><circle cx="668.28" cy="869.33" r="2.3" fill="rgba(0,136,255,0.1)" stroke="#0a88ff" stroke-width="1.5"/><circle cx="673.84" cy="869.25" r="2.3" fill="rgba(0,136,255,0.1)" stroke="#0a88ff" stroke-width="1.5"/><circle cx="679.40" cy="869.50" r="2.3" fill="rgba(0,136,255,0.1)" stroke="#0a88ff" stroke-width="1.5"/><rect x="293.7" y="549.8" width="40" height="12" fill="rgba(0,136,255,0.1)" stroke="#0a88ff" stroke-width="3"/><text x="340.2" y="558.9" font-family="Liberation Sans, sans-serif" font-size="12" fill="#666">Valor por Dia (R$)</text></svg>
<div class="box" style="left:734px;top:471px;width:691px;height:496px;border-radius:12px;background:#fff;border:1px solid #e5e7eb;box-shadow:0 1px 2px rgba(0,0,0,0.03)"></div>
<svg class="ic" style="left:759px;top:500px;" width="20" height="20" viewBox="0 0 24 24" fill="none" stroke="#0a84ff" stroke-width="2" stroke-linecap="round" stroke-linejoin="round"><path d="M21 12c.552 0 1.005-.449.95-.998a10 10 0 0 0-8.953-8.951c-.55-.055-.998.398-.998.95v8a1 1 0 0 0 1 1z"/><path d="M21.21 15.89A10 10 0 1 1 8 2.83"/></svg>
<div class="t" style="left:786.50px;top:501.46px;font-size:18px;line-height:18px;color:#111827;font-weight:700;letter-spacing:-0.3px;">Doações por Tipo</div>
<svg class="ic" style="left:0;top:0" width="1441" height="965" viewBox="0 0 1441 965"><path d="M1079.50,544.10 A124.3,124.3 0 1 1 961.20,706.55 L993.08,696.27 A90.8,90.8 0 1 0 1079.50,577.60 Z" fill="#36f9a1"/><path d="M961.20,706.55 A124.3,124.3 0 0 1 1079.50,544.10 L1079.50,577.60 A90.8,90.8 0 0 0 993.08,696.27 Z" fill="#33608c"/><line x1="1079.50" y1="581.60" x2="1079.50" y2="540.10" stroke="#fff" stroke-width="7.2"/><line x1="996.89" y1="695.04" x2="957.39" y2="707.78" stroke="#fff" stroke-width="7.2"/><circle cx="1023" cy="823.3" r="7" fill="#33608c"/><circle cx="1110" cy="823.3" r="7" fill="#36f9a1"/></svg>
<div class="t" style="left:1036.00px;top:816.54px;font-size:12px;line-height:12px;color:#666;font-weight:400;letter-spacing:-0.26px;">BOLETO</div>
<div class="t" style="left:1122.80px;top:816.54px;font-size:12px;line-height:12px;color:#666;font-weight:400;letter-spacing:0.1px;">PIX</div>
<div class="t" style="left:1034.90px;top:629.33px;font-size:36px;line-height:36px;color:#0f172a;font-weight:700;letter-spacing:-0.125px;">1.435</div>
<div class="t" style="left:1037.00px;top:668.80px;font-size:13px;line-height:13px;color:#9ca3af;font-weight:400;letter-spacing:0.154px;">doações totais</div>
<div class="t" style="left:1050.70px;top:690.30px;font-size:15px;line-height:15px;color:#1fe58e;font-weight:700;letter-spacing:0.033px;">70% PIX</div>
<div class="box" style="left:759px;top:864px;width:314px;height:79px;border-radius:8px;background:linear-gradient(135deg,#eff6ff,#ecfeff);border:2px solid #bfdbfe"></div>
<div class="box" style="left:773px;top:878px;width:32px;height:32px;border-radius:8px;background:linear-gradient(135deg,#0052a8,#0068d0);box-shadow:0 4px 6px -1px rgba(0,0,0,0.12)"></div>
<svg class="ic" style="left:781px;top:886px;" width="16" height="16" viewBox="0 0 24 24" fill="none" stroke="#fff" stroke-width="2" stroke-linecap="round" stroke-linejoin="round"><path d="M6 9H4.5a2.5 2.5 0 0 1 0-5H6"/><path d="M18 9h1.5a2.5 2.5 0 0 0 0-5H18"/><path d="M4 22h16"/><path d="M10 14.66V17c0 .55-.47.98-.97 1.21C7.85 18.75 7 20.24 7 22"/><path d="M14 14.66V17c0 .55.47.98.97 1.21C16.15 18.75 17 20.24 17 22"/><path d="M18 2H6v7a6 6 0 0 0 12 0V2Z"/></svg>
<div class="t" style="left:813.30px;top:880.64px;font-size:12px;line-height:12px;color:#312e81;font-weight:700;letter-spacing:0.015px;">Tipo Dominante</div>
<div class="t" style="left:813.30px;top:898.64px;font-size:12px;line-height:12px;color:#4338ca;font-weight:400;letter-spacing:-0.1px;"><b>PIX</b> com <b>70.0%</b></div>
<div class="t" style="left:812.30px;top:916.93px;font-size:10px;line-height:10px;color:#2563eb;font-weight:400;letter-spacing:-0.182px;">1005 doações</div>
<div class="box" style="left:1085px;top:864px;width:314px;height:79px;border-radius:8px;background:linear-gradient(135deg,#ecfeff,#eff6ff);border:2px solid #a5f3fc"></div>
<div class="box" style="left:1099px;top:878px;width:28px;height:28px;border-radius:8px;background:linear-gradient(135deg,#0a8ff5,#0aa2ff);box-shadow:0 4px 6px -1px rgba(0,0,0,0.1)"></div>
<svg class="ic" style="left:1105px;top:884px;" width="16" height="16" viewBox="0 0 24 24" fill="none" stroke="#fff" stroke-width="2" stroke-linecap="round" stroke-linejoin="round"><path d="M21 12c.552 0 1.005-.449.95-.998a10 10 0 0 0-8.953-8.951c-.55-.055-.998.398-.998.95v8a1 1 0 0 0 1 1z"/><path d="M21.21 15.89A10 10 0 1 1 8 2.83"/></svg>
<div class="t" style="left:1134.70px;top:880.64px;font-size:12px;line-height:12px;color:#581c87;font-weight:700;letter-spacing:-0.223px;">Diversificação</div>
<div class="t" style="left:1135.70px;top:898.64px;font-size:12px;line-height:12px;color:#7e22ce;font-weight:400;letter-spacing:0.0px;"><b>2</b> tipos diferentes</div>
<div class="t" style="left:1135.70px;top:916.93px;font-size:10px;line-height:10px;color:#9333ea;font-weight:400;letter-spacing:-0.217px;">Total: 1435 doações</div>
</body></html>
